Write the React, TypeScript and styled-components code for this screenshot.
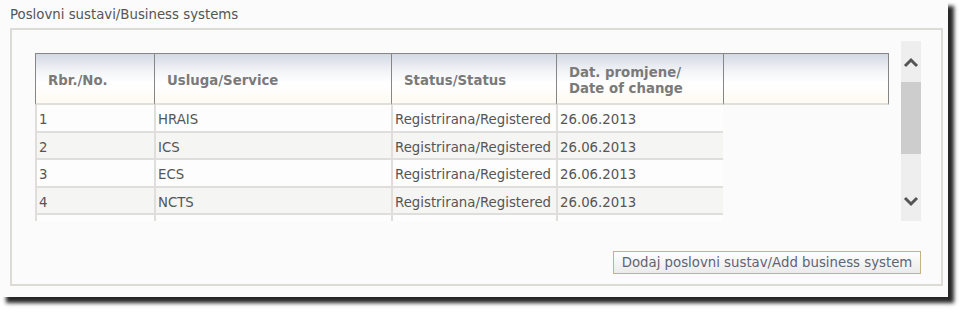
import React from 'react';
import styled, { createGlobalStyle } from 'styled-components';

const GlobalStyle = createGlobalStyle`
  body {
    margin: 0;
    background: #ffffff;
    font-family: 'DejaVu Sans', Verdana, sans-serif;
  }
`;

const Page = styled.div`
  width: 964px;
  height: 312px;
  box-sizing: border-box;
  padding: 0 16px 15px 0;
`;

const Window = styled.div`
  width: 948px;
  height: 297px;
  background: #fafbfa;
  box-shadow: 6px 6px 4px rgba(0, 0, 0, 0.85);
  display: flex;
  flex-direction: column;
`;

const Title = styled.div`
  height: 28px;
  line-height: 30px;
  padding-left: 10px;
  font-size: 13.3px;
  color: #555;
`;

const Panel = styled.section`
  margin: 0 5px 0 10px;
  height: 258px;
  box-sizing: border-box;
  border: 2px solid #dddbd6;
  padding: 11px 20px 0 0;
  display: flex;
  flex-direction: column;
`;

const ScrollArea = styled.div`
  display: flex;
  height: 180px;
`;

const Viewport = styled.div`
  flex: 1;
  overflow: hidden;
  padding: 12px 12px 0 23px;
`;

const Table = styled.table`
  border-collapse: separate;
  border-spacing: 0;
  table-layout: fixed;
  width: 854px;
  font-size: 13.3px;
`;

const HeadCell = styled.th<{ $w: number }>`
  width: ${(p) => p.$w}px;
  height: 52px;
  box-sizing: border-box;
  padding: 5px 0 0 12px;
  text-align: left;
  font-weight: bold;
  color: #7a7a7a;
  line-height: 16px;
  background: linear-gradient(#d3d8e3 0%, #f3f4f7 35%, #ffffff 60%, #fdfaf2 100%);
  border-top: 1px solid #868686;
  border-left: 1px solid #868686;
  border-bottom: 2px solid #e2dfda;
  &:last-child {
    border-right: 1px solid #868686;
  }
`;

const Row = styled.tr<{ $alt?: boolean }>`
  td:not(:last-child) {
    background: ${(p) => (p.$alt ? '#f5f5f4' : '#fcfdfc')};
  }
`;

const Cell = styled.td`
  height: 27.5px;
  box-sizing: border-box;
  padding: 4px 0 0 2px;
  color: #555;
  white-space: nowrap;
  border-left: 2px solid #dfdeda;
  border-bottom: 2px solid #dfdeda;
  &:last-child {
    border: none;
  }
`;

const Scrollbar = styled.div`
  width: 20px;
  background: #eeeeee;
  display: flex;
  flex-direction: column;
  align-items: center;
`;

const ArrowBox = styled.div`
  height: 41px;
  display: flex;
  align-items: center;
  justify-content: center;
`;

const Thumb = styled.div`
  align-self: stretch;
  height: 72px;
  background: #cdcdcd;
`;

const Spacer = styled.div`
  flex: 1;
`;

const Footer = styled.div`
  display: flex;
  justify-content: flex-end;
  margin-top: 30px;
`;

const Button = styled.button`
  height: 23px;
  width: 308px;
  padding: 0;
  font-family: 'DejaVu Sans', Verdana, sans-serif;
  font-size: 13.3px;
  color: #5d6475;
  background: linear-gradient(#fefefe, #ebebeb);
  border: 1px solid #c5b27f;
`;

const columns = [
  { key: 'no', label: 'Rbr./No.', w: 119 },
  { key: 'service', label: 'Usluga/Service', w: 237 },
  { key: 'status', label: 'Status/Status', w: 165 },
  { key: 'date', label: 'Dat. promjene/\nDate of change', w: 167 },
  { key: 'extra', label: '', w: 166 },
];

const rows = [
  { no: '1', service: 'HRAIS', status: 'Registrirana/Registered', date: '26.06.2013' },
  { no: '2', service: 'ICS', status: 'Registrirana/Registered', date: '26.06.2013' },
  { no: '3', service: 'ECS', status: 'Registrirana/Registered', date: '26.06.2013' },
  { no: '4', service: 'NCTS', status: 'Registrirana/Registered', date: '26.06.2013' },
];

function Chevron({ up }: { up?: boolean }) {
  return (
    <svg width="16" height="12" viewBox="0 0 16 12">
      <polyline
        points={up ? '2,10 8,4 14,10' : '2,3 8,9 14,3'}
        fill="none"
        stroke="#555"
        strokeWidth="3"
      />
    </svg>
  );
}

export default function App() {
  return (
    <Page>
      <GlobalStyle />
      <Window>
        <Title>Poslovni sustavi/Business systems</Title>
        <Panel>
          <ScrollArea>
            <Viewport>
              <Table>
                <thead>
                  <tr>
                    {columns.map((c) => (
                      <HeadCell key={c.key} $w={c.w}>
                        {c.label.split('\n').map((line) => (
                          <div key={line}>{line}</div>
                        ))}
                      </HeadCell>
                    ))}
                  </tr>
                </thead>
                <tbody>
                  {rows.map((r, i) => (
                    <Row key={r.no} $alt={i % 2 === 1}>
                      <Cell>{r.no}</Cell>
                      <Cell>{r.service}</Cell>
                      <Cell>{r.status}</Cell>
                      <Cell>{r.date}</Cell>
                      <Cell />
                    </Row>
                  ))}
                  {/* next row, scrolled out of view */}
                  <Row>
                    <Cell />
                    <Cell />
                    <Cell />
                    <Cell />
                    <Cell />
                  </Row>
                </tbody>
              </Table>
            </Viewport>
            <Scrollbar>
              <ArrowBox>
                <Chevron up />
              </ArrowBox>
              <Thumb />
              <Spacer />
              <ArrowBox>
                <Chevron />
              </ArrowBox>
            </Scrollbar>
          </ScrollArea>
          <Footer>
            <Button type="button">Dodaj poslovni sustav/Add business system</Button>
          </Footer>
        </Panel>
      </Window>
    </Page>
  );
}
